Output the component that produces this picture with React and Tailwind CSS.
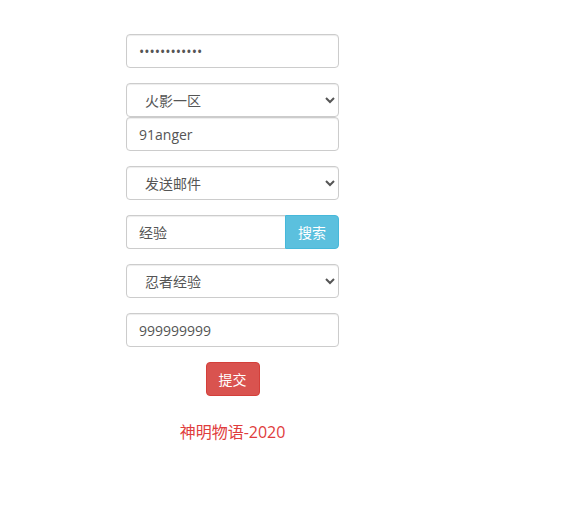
const font = { fontFamily: '"Open Sans", "Noto Sans CJK SC", sans-serif' };

const field =
  "block w-full h-[34px] px-3 text-[14px] text-[#555] bg-white border border-[#ccc] rounded-[4px] shadow-[inset_0_1px_1px_rgba(0,0,0,0.075)] outline-none";

export default function App() {
  return (
    <div className="min-h-screen bg-white" style={font}>
      <form className="w-[213px] ml-[126px] pt-[34px]">
        <div className="mb-[15px]">
          <input type="password" defaultValue="123456789012" className={field} />
        </div>

        <div className="mb-[15px]">
          <select className={field + " pl-[14px]"} defaultValue="1">
            <option value="1">火影一区</option>
            <option value="2">火影二区</option>
          </select>
          <input type="text" defaultValue="91anger" className={field} />
        </div>

        <div className="mb-[15px]">
          <select className={field + " pl-[14px]"} defaultValue="mail">
            <option value="mail">发送邮件</option>
            <option value="item">发送物品</option>
          </select>
        </div>

        <div className="mb-[15px] flex">
          <input
            type="text"
            defaultValue="经验"
            className="flex-1 min-w-0 h-[34px] px-3 text-[14px] text-[#555] bg-white border border-[#ccc] border-r-0 rounded-l-[4px] shadow-[inset_0_1px_1px_rgba(0,0,0,0.075)] outline-none"
          />
          <button
            type="button"
            className="w-[54px] h-[34px] text-[14px] text-white bg-[#5bc0de] border border-[#46b8da] rounded-r-[4px]"
          >
            搜索
          </button>
        </div>

        <div className="mb-[15px]">
          <select className={field + " pl-[14px]"} defaultValue="exp">
            <option value="exp">忍者经验</option>
            <option value="coin">铜币</option>
          </select>
        </div>

        <div className="mb-[15px]">
          <input type="text" defaultValue="999999999" className={field} />
        </div>

        <div className="flex justify-center">
          <button
            type="button"
            className="w-[54px] h-[34px] text-[14px] text-white bg-[#d9534f] border border-[#d43f3a] rounded-[4px]"
          >
            提交
          </button>
        </div>

        <p className="mt-[24px] text-center text-[16px] text-[#e03c3c]">神明物语-2020</p>
      </form>
    </div>
  );
}
